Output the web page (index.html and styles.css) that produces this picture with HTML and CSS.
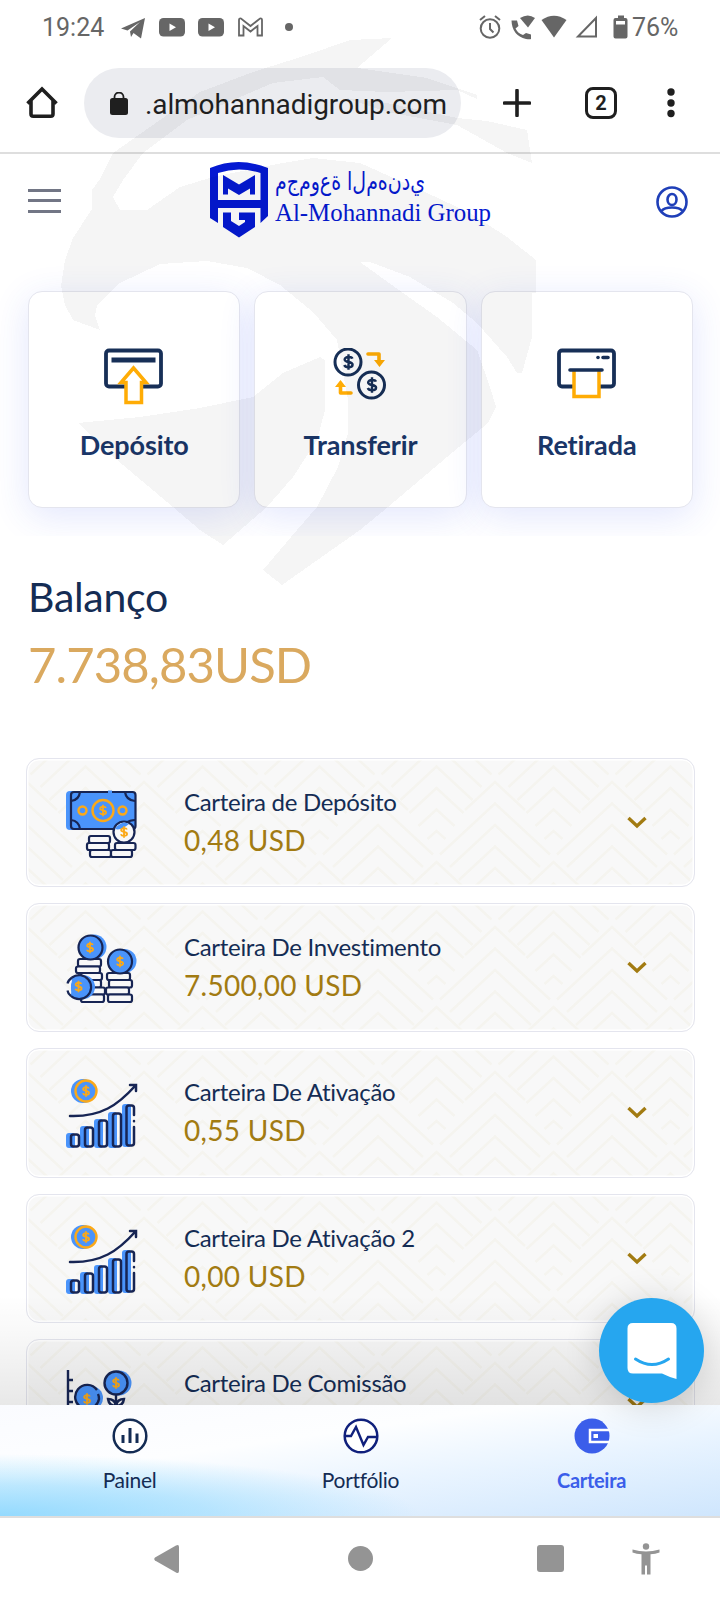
FILE: index.html
```html
<!DOCTYPE html>
<html lang="pt-BR">
<head>
    <meta charset="UTF-8">
    <meta name="viewport" content="width=device-width, initial-scale=1.0">
    <title>Carteira - Al-Mohannadi Group</title>
    <link rel="stylesheet" href="styles.css">
</head>
<body>
<svg class="defs" width="0" height="0">
    <defs>
        <!-- $ sign, 10x14 -->
        <symbol id="dollar" viewBox="0 0 10 14">
            <path d="M8.3 4.2C7.8 3 6.6 2.8 5 2.8c-2 0-3.2.8-3.2 2.1 0 3 6.6 1.2 6.6 4.3 0 1.3-1.3 2.1-3.4 2.1-1.9 0-3.1-.6-3.5-1.8M5 .6v12.8" fill="none" stroke="currentColor" stroke-width="2"/>
        </symbol>
        <symbol id="growth" viewBox="0 0 72 70">
            <g fill="#4a94fb">
                <circle cx="17" cy="12" r="12"/>
                <rect x="0" y="54" width="9" height="15" rx="3"/>
                <rect x="14" y="47" width="9" height="22" rx="3"/>
                <rect x="28" y="40" width="9" height="29" rx="3"/>
                <rect x="42" y="33" width="9" height="36" rx="3"/>
                <rect x="56" y="25" width="9" height="43" rx="3"/>
            </g>
            <circle cx="20" cy="12" r="10.500" fill="#4a94fb" stroke="#fba919" stroke-width="2.400"/>
            <use href="#dollar" x="15.500" y="5" width="9" height="14" color="#fba919"/>
            <g fill="none" stroke="#172554" stroke-width="2.500" stroke-linecap="round">
                <path d="M4 37C35 38 52 26 69 7M64 6h6v6"/>
                <rect x="5" y="55.500" width="8" height="12" rx="2.500"/>
                <rect x="19" y="48.500" width="8" height="19" rx="2.500"/>
                <rect x="33" y="41.500" width="8" height="26" rx="2.500"/>
                <rect x="47" y="34.500" width="8" height="33" rx="2.500"/>
                <path d="M68 36v-7q0-2.500-2.500-2.500H63q-2.500 0-2.500 2.500v35q0 2.500 2.500 2.500h2.500q2.500 0 2.500-2.500V48M68 42v.2"/>
            </g>
        </symbol>
        <symbol id="chevron" viewBox="0 0 20 13">
            <path d="M1.500 2 10 10 18.500 2" fill="none" stroke="#a27b12" stroke-width="3.400"/>
        </symbol>
    </defs>
</svg>

<div class="phone">
    <div class="status-bar">
        <span class="clock">19:24</span>
        <svg class="status-left" width="180" height="26" viewBox="0 0 180 26">
            <g fill="#666">
                <path d="M0 12.500 24 2l-4 20.500L12.500 17 10 21 9 15.500 19 6 6.500 14.500z"/>
                <rect x="38" y="2" width="26" height="18.500" rx="4.500"/>
                <rect x="77" y="2" width="26" height="18.500" rx="4.500"/>
                <circle cx="168" cy="11" r="4"/>
            </g>
            <path d="M48.500 7.500v7.500l6.500-3.700zM87.500 7.500v7.500l6.500-3.700z" fill="#fff"/>
            <path d="M118 19.500V4q0-2 2-1.500l9.500 7.500 9.500-7.500q2-.5 2 1.500v15.500h-4.500V10L129.500 15.500 122.500 10v9.500z" fill="none" stroke="#666" stroke-width="1.800"/>
        </svg>
        <svg class="status-right" width="152" height="26" viewBox="0 0 152 26">
            <g fill="none" stroke="#666" stroke-width="2">
                <circle cx="11" cy="13.500" r="9.300"/>
                <path d="M11 8v6l3.500 3.500M1 5 6 1M21 5 16 1"/>
                <path d="M99 21.500h18V3z"/>
            </g>
            <g fill="#666">
                <path d="M32.500 5.500h5.500l1.500 5.500-3 2.500q2.500 5 7.500 6.500l3-2 5 1.500v4.500q-1 .5-5 0-14-3.500-14.500-18.500z"/>
                <path d="M49 12.500 41 3Q49-2 56 3z"/>
                <path d="M75 22.500 62.500 5Q75-3.500 87.500 5z"/>
                <path d="M139 .5h6V3h1.500q2 0 2 2v16.500q0 2-2 2h-10q-2 0-2-2V5q0-2 2-2h2.500z"/>
            </g>
            <path d="M137 6h9v3.500h-9z" fill="#fff"/>
        </svg>
        <span class="battery">76%</span>
    </div>

    <div class="toolbar">
        <svg class="home" width="34" height="34" viewBox="0 0 34 34">
            <path d="M2.500 17.500 17 3l14.500 14.500M6 14.500V28q0 2.300 2.300 2.300h17.400q2.300 0 2.300-2.300V14.500" fill="none" stroke="#1f1f1f" stroke-width="3.600"/>
        </svg>
        <div class="url">
            <svg width="18" height="24" viewBox="0 0 18 24">
                <rect y="6" width="18" height="17" rx="2.500" fill="#1f1f1f"/>
                <path d="M4.500 7V5a4.500 4.500 0 0 1 9 0V7" fill="none" stroke="#1f1f1f" stroke-width="1.800"/>
            </svg>
            <span>.almohannadigroup.com</span>
        </div>
        <svg class="plus" width="28" height="28" viewBox="0 0 28 28">
            <path d="M14 1.500v25M1.500 14h25" stroke="#1f1f1f" stroke-width="3.600" stroke-linecap="round"/>
        </svg>
        <div class="tabs">2</div>
        <svg class="dots" width="8" height="30" viewBox="0 0 8 30">
            <g fill="#1f1f1f"><circle cx="4" cy="4" r="3.700"/><circle cx="4" cy="15" r="3.700"/><circle cx="4" cy="25.500" r="3.700"/></g>
        </svg>
    </div>

    <main class="page">
        <header class="site-header">
            <div class="burger"><i></i><i></i><i></i></div>
            <svg class="logo" width="284" height="80" viewBox="0 0 284 80">
                <g fill="#0519d2">
                    <path fill-rule="evenodd" d="M0 8Q28-4 58 8V56L50.500 63V48H8v15L0 58zM8 13V40H50.500V13Q29 6 8 13z"/>
                    <path d="M13 15 29 24.500 45 15V34.500H40V28.500L29 35 18 28.500V34.500H13z"/>
                    <path d="M13 52.500h8v8.500l8 5 6-4v-2h-6v-7.500h16V67L29 77.500 13 67z"/>
                </g>
                <text x="65" y="30" class="logo-ar" direction="ltr" textLength="150" lengthAdjust="spacingAndGlyphs">&#8237;م&#8204;ج&#8204;م&#8204;و&#8204;ع&#8204;ة ا&#8204;ل&#8204;م&#8204;ه&#8204;ن&#8204;د&#8204;ي&#8236;</text>
                <text x="65" y="61" class="logo-en" textLength="216" lengthAdjust="spacingAndGlyphs">Al-Mohannadi Group</text>
            </svg>
            <svg class="user" width="32" height="32" viewBox="0 0 32 32">
                <g fill="none" stroke="#1f3fb8" stroke-width="2.600">
                    <circle cx="16" cy="16" r="14.500"/>
                    <ellipse cx="16" cy="13.500" rx="4.500" ry="5.500"/>
                    <path d="M5.500 25Q8 21.500 16 21.500T26.500 25"/>
                </g>
            </svg>
        </header>

        <section class="actions">
            <div class="action">
                <svg width="60" height="58" viewBox="0 0 60 58">
                    <rect x="2" y="2.500" width="55" height="36" rx="3" fill="none" stroke="#172f57" stroke-width="3.800"/>
                    <path d="M7.500 12h44" stroke="#172f57" stroke-width="5"/>
                    <path d="M29.500 20 42 34.500H37.500V54.500H22V34.500H17z" fill="#fff" stroke="#ffac05" stroke-width="3.500"/>
                </svg>
                <span>Depósito</span>
            </div>
            <div class="action">
                <svg width="60" height="58" viewBox="0 0 60 58">
                    <g fill="none" stroke="#172f57" stroke-width="3">
                        <circle cx="18" cy="14" r="13"/>
                        <circle cx="41.500" cy="37" r="13"/>
                    </g>
                    <use href="#dollar" x="12.500" y="5.500" width="12" height="17" color="#172f57"/>
                    <use href="#dollar" x="36" y="28.500" width="12" height="17" color="#172f57"/>
                    <g fill="none" stroke="#ffac05" stroke-width="3.600" stroke-linecap="round" stroke-linejoin="round">
                        <path d="M38 6h11v7"/>
                        <path d="M21 45H10.500v-7"/>
                    </g>
                    <path d="M44 12h11l-5.500 7zM5 39h11l-5.500-7z" fill="#ffac05"/>
                </svg>
                <span>Transferir</span>
            </div>
            <div class="action">
                <svg width="60" height="58" viewBox="0 0 60 58">
                    <rect x="2" y="2.500" width="55" height="36" rx="3" fill="none" stroke="#172f57" stroke-width="3.800"/>
                    <path d="M17 21v27.500h25V21" fill="#fff" stroke="#ffac05" stroke-width="3.500"/>
                    <path d="M13 22h32M46 9.500h5" stroke="#172f57" stroke-width="3.600" stroke-linecap="round"/>
                    <circle cx="41" cy="9.500" r="1.800" fill="#172f57"/>
                </svg>
                <span>Retirada</span>
            </div>
        </section>

        <section class="balance">
            <h1>Balanço</h1>
            <p>7.738,83USD</p>
        </section>

        <section class="wallets">
            <div class="wallet">
                <svg class="wallet-icon" width="72" height="70" viewBox="0 0 72 70">
                    <rect x="0" y="2" width="66" height="39" rx="4" fill="#4a94fb"/>
                    <rect x="5" y="3" width="64.500" height="37" rx="3" fill="#4a94fb" stroke="#172554" stroke-width="2.200"/>
                    <path d="M14 3q-1 8-9 9M59 3q1 8 10 9M14 40q-1-8-9-9M60 34q4-3 9-3" fill="none" stroke="#172554" stroke-width="2.200"/>
                    <path d="M42 3h4" stroke="#4a94fb" stroke-width="3"/>
                    <g fill="none" stroke="#fba919" stroke-width="2.400">
                        <circle cx="37" cy="21.500" r="10.500"/>
                        <circle cx="16.500" cy="21.500" r="4"/>
                        <circle cx="56.500" cy="21.500" r="4"/>
                    </g>
                    <use href="#dollar" x="32.500" y="14.500" width="9" height="14" color="#fba919"/>
                    <circle cx="58" cy="43" r="10.500" fill="#f8f8f8" stroke="#172554" stroke-width="2.200"/>
                    <path d="M49 40q6 2 14-5-5-3-9 0-4 2-5 5z" fill="#4a94fb"/>
                    <use href="#dollar" x="53.500" y="36" width="9" height="14" color="#fba919"/>
                    <g fill="#f8f8f8" stroke="#172554" stroke-width="2.200">
                        <rect x="23" y="47" width="21" height="7" rx="2"/>
                        <rect x="21" y="54" width="22" height="7" rx="2"/>
                        <rect x="49" y="54" width="20.500" height="7" rx="2"/>
                        <rect x="24" y="61" width="21" height="7" rx="2"/>
                        <rect x="45" y="61" width="21" height="7" rx="2"/>
                    </g>
                </svg>
                <div class="wallet-text">
                    <h2>Carteira de Depósito</h2>
                    <p>0,48 USD</p>
                </div>
                <svg class="chevron" width="20" height="13"><use href="#chevron"/></svg>
            </div>
            <div class="wallet">
                <svg class="wallet-icon" width="72" height="70" viewBox="0 0 72 70">
                    <g fill="#4a94fb">
                        <circle cx="28" cy="13" r="12.500"/>
                        <circle cx="58.500" cy="27" r="12"/>
                        <circle cx="17" cy="53" r="12"/>
                    </g>
                    <g fill="#f8f8f8" stroke="#172554" stroke-width="2.200">
                        <rect x="12" y="25" width="23" height="7.500" rx="2"/>
                        <rect x="10" y="32.500" width="24" height="6.500" rx="2"/>
                        <rect x="15" y="39" width="21" height="7" rx="2"/>
                        <rect x="15" y="46" width="20" height="7.500" rx="2"/>
                        <rect x="18" y="53.500" width="21" height="7" rx="2"/>
                        <rect x="15" y="60.500" width="23" height="7.500" rx="2"/>
                        <rect x="41" y="39" width="23" height="7" rx="2"/>
                        <rect x="43" y="46" width="23" height="7.500" rx="2"/>
                        <rect x="40" y="53.500" width="23" height="7" rx="2"/>
                        <rect x="42" y="60.500" width="24" height="7.500" rx="2"/>
                    </g>
                    <circle cx="17" cy="53" r="12" fill="#4a94fb"/>
                    <g fill="#4a94fb" stroke="#172554" stroke-width="2.200">
                        <circle cx="24.500" cy="13.500" r="12"/>
                        <circle cx="54" cy="27.500" r="12"/>
                        <path d="M6 43.500A12 12 0 1 1 5 62"/>
                    </g>
                    <path d="M6 43.500q-4 3-4.500 6M1.500 56.500Q2 60 5 62" fill="none" stroke="#172554" stroke-width="2.200"/>
                    <use href="#dollar" x="19.500" y="6.500" width="9" height="14" color="#fba919"/>
                    <use href="#dollar" x="49.500" y="20.500" width="9" height="14" color="#fba919"/>
                    <use href="#dollar" x="8" y="45.500" width="9" height="14" color="#fba919"/>
                </svg>
                <div class="wallet-text">
                    <h2>Carteira De Investimento</h2>
                    <p>7.500,00 USD</p>
                </div>
                <svg class="chevron" width="20" height="13"><use href="#chevron"/></svg>
            </div>
            <div class="wallet">
                <svg class="wallet-icon" width="72" height="70"><use href="#growth"/></svg>
                <div class="wallet-text">
                    <h2>Carteira De Ativação</h2>
                    <p>0,55 USD</p>
                </div>
                <svg class="chevron" width="20" height="13"><use href="#chevron"/></svg>
            </div>
            <div class="wallet">
                <svg class="wallet-icon" width="72" height="70"><use href="#growth"/></svg>
                <div class="wallet-text">
                    <h2>Carteira De Ativação 2</h2>
                    <p>0,00 USD</p>
                </div>
                <svg class="chevron" width="20" height="13"><use href="#chevron"/></svg>
            </div>
            <div class="wallet last">
                <svg class="wallet-icon" width="72" height="70" viewBox="0 0 72 70">
                    <circle cx="53" cy="13" r="12.500" fill="#4a94fb"/>
                    <circle cx="25" cy="28" r="12" fill="#4a94fb"/>
                    <g fill="none" stroke="#172554" stroke-width="2.400">
                        <path d="M2 0v69h68M2 10h5M2 21h5M2 32h5"/>
                        <circle cx="50" cy="13" r="11.500" fill="#4a94fb"/>
                        <path d="M31 20A12 12 0 1 0 33 29q0-3-1-5" fill="#4a94fb"/>
                        <path d="M50 25v12M50 36q-7 0-8-7 7 0 8 7 1-7 8-7-1 7-8 7"/>
                    </g>
                    <use href="#dollar" x="45.500" y="6" width="9" height="14" color="#fba919"/>
                    <use href="#dollar" x="16.500" y="22" width="9" height="14" color="#fba919"/>
                </svg>
                <div class="wallet-text">
                    <h2>Carteira De Comissão</h2>
                </div>
                <svg class="chevron" width="20" height="13"><use href="#chevron"/></svg>
            </div>
        </section>
        <div class="fade"></div>
    </main>

    <nav class="bottom-nav">
        <a class="tab">
            <svg width="36" height="36" viewBox="0 0 36 36">
                <circle cx="18" cy="18" r="16.300" fill="#fff" stroke="#142c54" stroke-width="2.500"/>
                <path d="M11 25v-8M18 25V10M25 25V15.500" stroke="#142c54" stroke-width="3"/>
            </svg>
            <span>Painel</span>
        </a>
        <a class="tab">
            <svg width="36" height="36" viewBox="0 0 36 36">
                <circle cx="18" cy="18" r="16.300" fill="#fff" stroke="#10207c" stroke-width="2.500"/>
                <path d="M2 18h6l5-9 7.500 18 4.500-8h9" fill="none" stroke="#10207c" stroke-width="2.400"/>
            </svg>
            <span>Portfólio</span>
        </a>
        <a class="tab active">
            <svg width="36" height="36" viewBox="0 0 36 36">
                <circle cx="18" cy="18" r="17.500" fill="#3b5eea"/>
                <path d="M36 12H16v12h20" fill="none" stroke="#fff" stroke-width="2.500"/>
                <rect x="19.500" y="16" width="4.500" height="4" fill="#fff"/>
            </svg>
            <span>Carteira</span>
        </a>
    </nav>

    <div class="system-nav">
        <svg class="back" width="26" height="30" viewBox="0 0 26 30"><path d="M1 13.500 22 1.500q3-1.500 3 1.500v24q0 3-3 1.500L1 16.500q-1.500-1.500 0-3z" fill="#949494"/></svg>
        <i class="circle"></i>
        <i class="square"></i>
        <svg class="access" width="28" height="32" viewBox="0 0 28 32">
            <g fill="#949494">
                <circle cx="14" cy="3.500" r="3.200"/>
                <path d="M.5 6.500Q14 10.500 27.500 6.500v3q-4 1.500-9 1.700V31.500h-3.500v-9h-2v9H9.500V11.200Q4.500 11 .5 9.500z"/>
            </g>
        </svg>
    </div>

    <div class="chat">
        <svg width="50" height="58" viewBox="0 0 50 58">
            <path d="M6 1h38q5.500 0 5.500 5.500V57Q42 55 35 51.500H6Q.5 51.500 .5 46v-39.500Q.5 1 6 1z" fill="#fff"/>
            <path d="M8.500 37Q25 48 41.500 37" fill="none" stroke="#26a6ef" stroke-width="3" stroke-linecap="round"/>
        </svg>
    </div>

    <!-- falcon watermark -->
    <svg class="falcon" width="720" height="600" viewBox="0 0 720 600" shape-rendering="crispEdges">
        <g fill="#000" fill-opacity=".038">
            <path d="M392 38 350 40 307 55 253 72 200 92 150 127 113 153 100 179 92 190V209L73 238 65 260 61 286 65 305 73 320 100 330 95 316 97 305 120 283 160 264 207 261 247 268 280 285 313 312 337 340 348 400V433L338 467 317 507 297 530 263 570 282 585 360 530 388 507 447 457 488 423 496 407 490 387 477 350 437 317 403 293 360 262 370 262 410 277 453 303 477 323 507 357 517 373H522L532 337V293H536V260L507 237 470 213 427 193 360 163 313 158 283 163 213 177 180 187 147 210H120L113 197 123 180 143 153 187 120 240 97 273 83 323 77 340 90 387 92 457 90 477 99V95L427 78 357 68z"/>
            <path d="M345 98 387 103 457 118 487 121 527 130 532 163 507 153 457 125 387 112z"/>
            <path d="M78 423 140 417 200 408 253 397 283 373 320 357 325 360V410L317 440 293 477 267 507 223 545 200 530 173 507 117 460z"/>
        </g>
    </svg>
</div>
</body>
</html>
```
FILE: styles.css
```css
* {
    box-sizing: border-box;
    margin: 0;
    padding: 0;
}
body {
    background: #fff;
    font-family: Lato, "Liberation Sans", sans-serif;
    font-variant-ligatures: none;
}
svg {
    display: block;
    flex: none;
}
.defs {
    position: absolute;
}
.phone {
    position: relative;
    display: flex;
    flex-direction: column;
    width: 720px;
    height: 1600px;
    overflow: hidden;
}

/* android status bar */
.status-bar {
    display: flex;
    align-items: center;
    height: 56px;
    padding: 0 42px;
    font: 25px/58px Roboto, sans-serif;
    color: #666;
}
.clock {
    width: 79px;
}
.status-left {
    margin-top: 2px;
}
.status-right {
    margin-left: auto;
}
.battery {
    width: 46px;
    margin-left: 1px;
}

/* browser toolbar */
.toolbar {
    display: flex;
    align-items: center;
    height: 98px;
    padding: 0 45px 2px 25px;
    border-bottom: 2px solid #dedede;
}
.url {
    display: flex;
    align-items: center;
    gap: 17px;
    width: 377px;
    height: 70px;
    margin-left: 25px;
    padding: 2px 0 0 26px;
    border-radius: 35px;
    background: #ebecf0;
    font: 28px Roboto, sans-serif;
    letter-spacing: -.1px;
    color: #1f1f1f;
}
.plus {
    margin-left: 42px;
}
.tabs {
    width: 32px;
    height: 32px;
    margin-left: 54px;
    border: 3px solid #1f1f1f;
    border-radius: 8px;
    font: bold 20px/27px Roboto, sans-serif;
    text-align: center;
    color: #1f1f1f;
}
.dots {
    margin-left: auto;
}

/* page */
.page {
    position: relative;
    height: 1251px;
    overflow: hidden;
}
.site-header {
    display: flex;
    justify-content: space-between;
    align-items: center;
    height: 96px;
    padding: 0 32px 0 28px;
}
.burger {
    display: grid;
    gap: 7.500px;
    width: 33px;
    margin: 0 149px 3px 0;
}
.burger i {
    height: 3px;
    background: #727685;
}
.logo {
    margin: 0 auto 4px 0;
}
.logo-ar {
    font: 25px "DejaVu Sans", sans-serif;
    fill: #0519d2;
}
.logo-en {
    font: 25px "Liberation Serif", serif;
    fill: #0519d2;
}
.actions {
    display: grid;
    grid-template-columns: repeat(3, 1fr);
    gap: 14px;
    height: 286px;
    padding: 41px 27px 28px 28px;
    overflow: hidden;
}
.action {
    display: flex;
    flex-direction: column;
    align-items: center;
    gap: 21px;
    padding-top: 56px;
    border: 1px solid #e4e5ee;
    border-radius: 14px;
    background: #fff;
    box-shadow: 0 8px 36px rgba(50, 80, 240, .14);
    font-size: 27px;
    font-weight: bold;
    line-height: 36px;
    letter-spacing: -.1px;
    color: #1a3668;
}
.balance {
    padding: 33px 28px 0;
    height: 222px;
}
.balance h1 {
    font-size: 41px;
    font-weight: normal;
    line-height: 56px;
    letter-spacing: -.3px;
    color: #142c54;
}
.balance p {
    margin-top: 5px;
    font-size: 49px;
    line-height: 68px;
    letter-spacing: -.9px;
    color: #daa95f;
}
.wallets {
    display: grid;
    gap: 16px;
    padding: 0 25px 0 26px;
}
.wallet {
    display: flex;
    align-items: center;
    height: 129.200px;
    padding: 0 47px 0 39px;
    border: 1px solid #e4e5ee;
    border-radius: 13px;
    box-shadow: inset 0 0 0 1.500px #fff;
    background: #f8f8f8 url("data:image/svg+xml,%3Csvg xmlns='http://www.w3.org/2000/svg' width='117' height='160'%3E%3Cdefs%3E%3Cg id='c'%3E%3Cpath d='M-30 28 0 0 30 28M-55 72.500 0 21.500 55 72.500M-45 85 0 43 45 85M-36 98 0 64.500 36 98M-27 111 0 86 27 111M-18 124 0 107.500 18 124M-9 137 0 129 9 137'/%3E%3C/g%3E%3C/defs%3E%3Cg fill='none' stroke='%23f5f4ef' stroke-width='2.500'%3E%3Cuse href='%23c' y='23'/%3E%3Cuse href='%23c' x='117' y='23'/%3E%3Cuse href='%23c' x='58.500' y='-57'/%3E%3Cuse href='%23c' x='58.500' y='103'/%3E%3C/g%3E%3C/svg%3E");
}
.wallet-icon {
    margin-top: 3px;
}
.wallet-text {
    flex: 1;
    margin-left: 46px;
    white-space: nowrap;
}
.wallet h2 {
    font-size: 24px;
    font-weight: normal;
    line-height: 34px;
    letter-spacing: -.3px;
    color: #142c54;
}
.wallet p {
    margin-top: 1px;
    font-size: 28px;
    line-height: 40px;
    letter-spacing: .3px;
    color: #a27b12;
}
.last .wallet-text {
    padding-bottom: 40px;
}
.fade {
    position: absolute;
    left: 0;
    right: 0;
    bottom: 0;
    height: 110px;
    background: linear-gradient(rgba(0, 0, 0, 0), rgba(0, 0, 0, .03) 40%, rgba(0, 0, 0, .09));
}

/* site navigation */
.bottom-nav {
    display: grid;
    grid-template-columns: 259px 203px 259px;
    height: 111px;
    padding-top: 13px;
    background:
        radial-gradient(ellipse 420px 62px at 0 100%, #94dafe, rgba(148, 218, 254, .6) 50%, rgba(148, 218, 254, 0)),
        linear-gradient(172deg, #fafbff, #fdfeff 35%, #e9f4ff 62%, #cfe6fd);
}
.tab {
    display: flex;
    flex-direction: column;
    align-items: center;
    gap: 11px;
    font-size: 21px;
    line-height: 30px;
    letter-spacing: -.3px;
    color: #142c54;
}
.active {
    font-size: 20px;
    font-weight: bold;
    color: #3b5eea;
}

/* android navigation */
.system-nav {
    display: flex;
    align-items: center;
    height: 84px;
    padding: 0 60px 1px 154px;
    border-top: 2px solid #dedede;
}
.circle {
    width: 25px;
    height: 25px;
    margin-left: 168px;
    border-radius: 50%;
    background: #949494;
}
.square {
    width: 27px;
    height: 27px;
    margin-left: 164px;
    border-radius: 3px;
    background: #949494;
}
.access {
    margin-left: auto;
}

.chat {
    position: absolute;
    left: 599px;
    top: 1298px;
    display: grid;
    place-items: center;
    width: 105px;
    height: 105px;
    border-radius: 50%;
    background: #26a6ef;
    box-shadow: 0 3px 36px rgba(0, 0, 0, .16);
}
.falcon {
    position: absolute;
    left: 0;
    top: 0;
    pointer-events: none;
}
```
